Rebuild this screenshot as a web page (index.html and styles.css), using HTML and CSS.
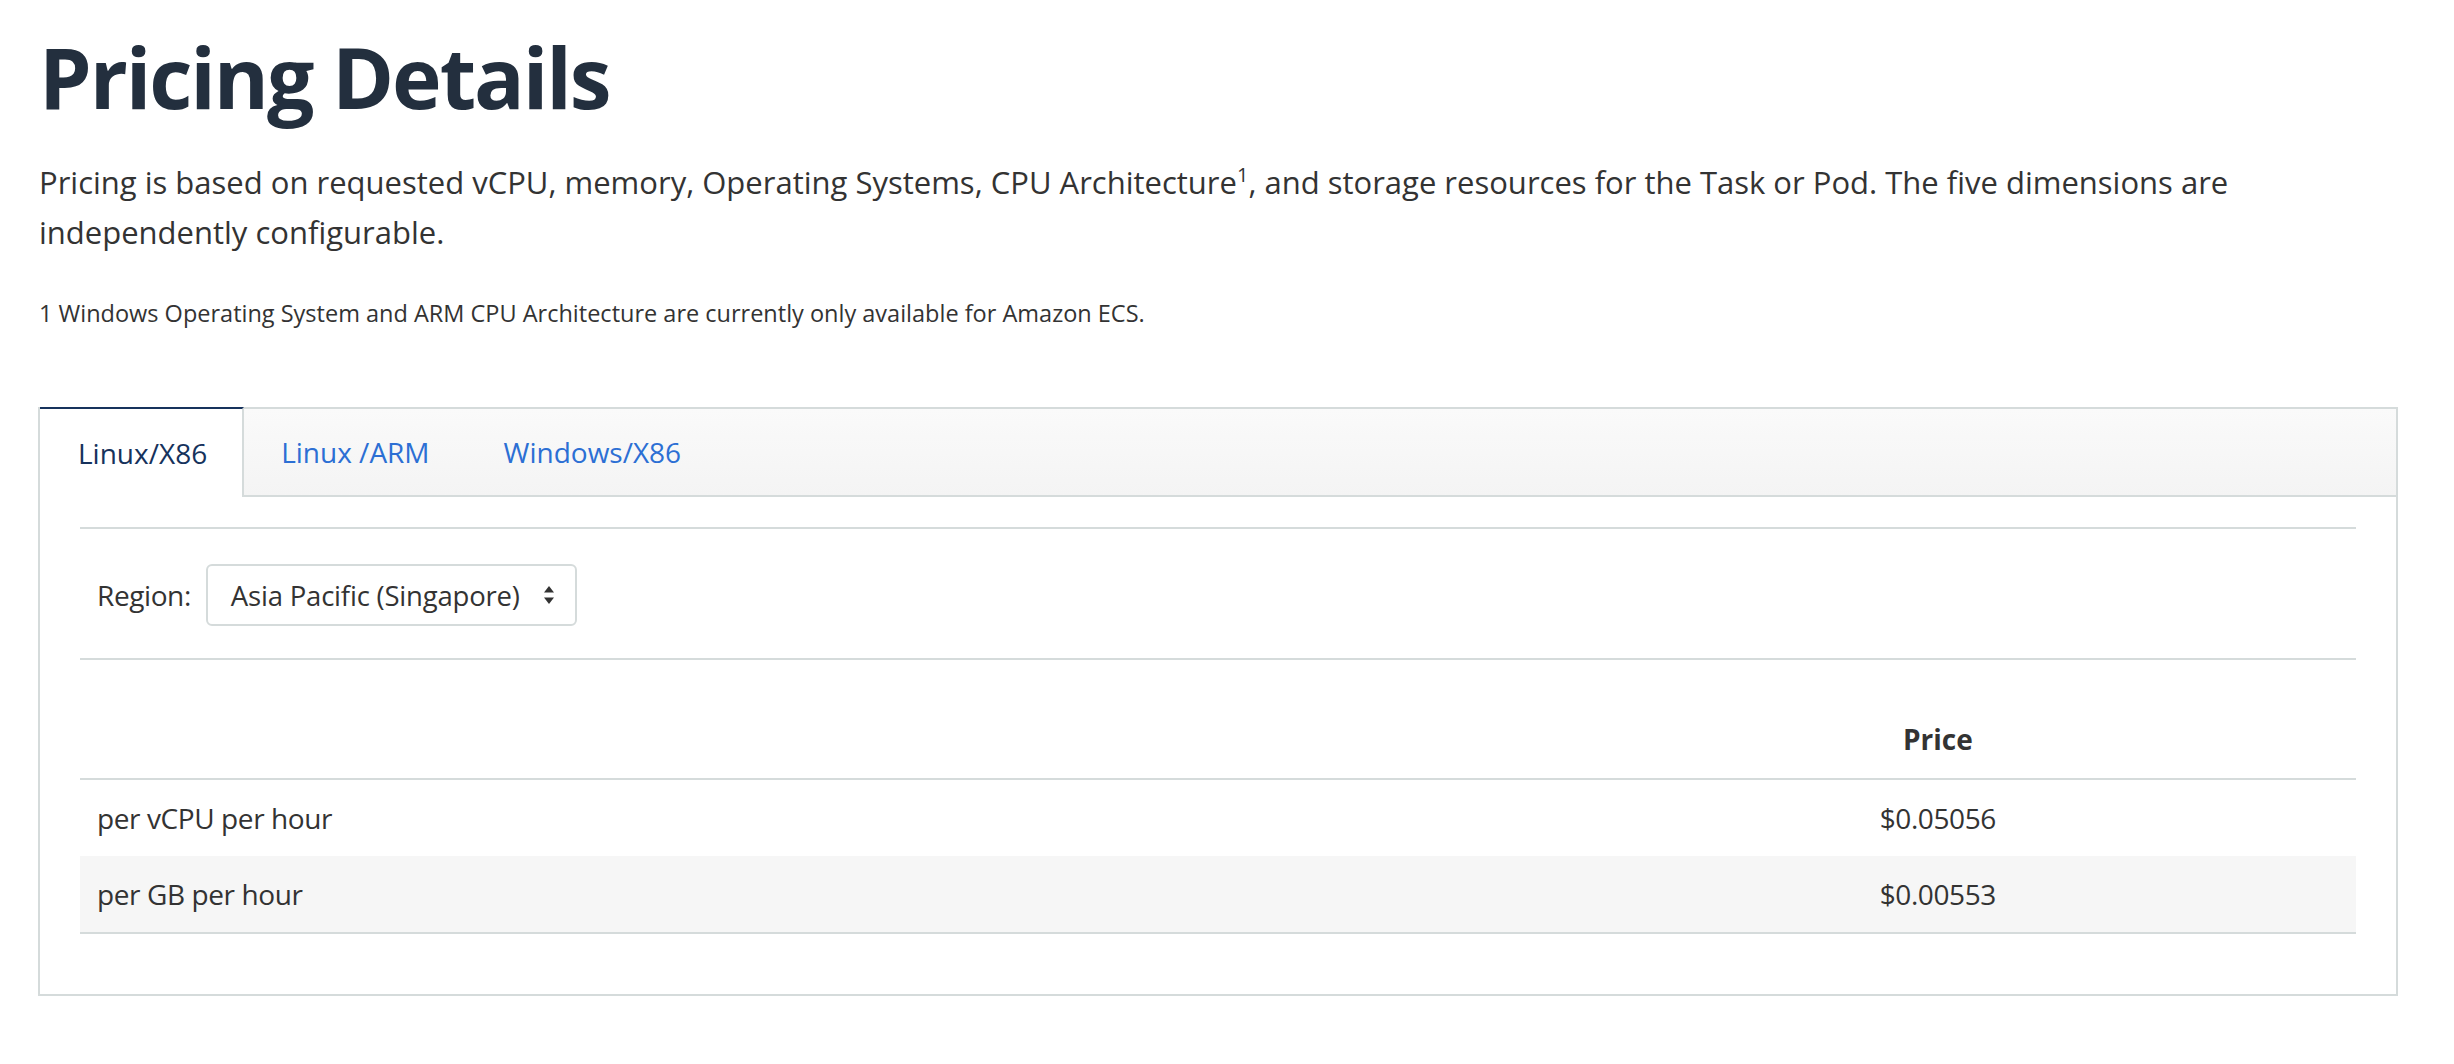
FILE: index.html
```html
<!DOCTYPE html>
<html lang="en">
<head>
<meta charset="utf-8">
<title>Pricing Details</title>
<link rel="stylesheet" href="styles.css">
</head>
<body>
<main class="page">
  <h1 class="title">Pricing Details</h1>
  <p class="lead">Pricing is based on requested vCPU, memory, Operating Systems, CPU Architecture<sup>1</sup>, and storage resources for the Task or Pod. The five dimensions are independently configurable.</p>
  <p class="footnote">1 Windows Operating System and ARM CPU Architecture are currently only available for Amazon ECS.</p>

  <section class="panel">
    <nav class="tabs">
      <span class="tab tab-active">Linux/X86</span>
      <span class="tab">Linux /ARM</span>
      <span class="tab">Windows/X86</span>
    </nav>
    <div class="tab-body">
      <div class="region-row">
        <span class="region-label">Region:</span>
        <div class="select">
          <span class="select-text">Asia Pacific (Singapore)</span>
          <svg class="select-arrows" width="10" height="18" viewBox="0 0 10 18" aria-hidden="true">
            <path d="M5 0 L10 6.5 L0 6.5 Z" fill="#333"/>
            <path d="M0 11.5 L10 11.5 L5 18 Z" fill="#333"/>
          </svg>
        </div>
      </div>
      <table class="price-table">
        <thead>
          <tr><th class="col-name"></th><th class="col-price">Price</th></tr>
        </thead>
        <tbody>
          <tr><td>per vCPU per hour</td><td class="col-price">$0.05056</td></tr>
          <tr class="striped"><td>per GB per hour</td><td class="col-price">$0.00553</td></tr>
        </tbody>
      </table>
    </div>
  </section>
</main>
</body>
</html>
```

FILE: styles.css
```css
html, body {
  margin: 0;
  padding: 0;
  background: #ffffff;
}

body {
  font-family: "Open Sans", "Noto Sans", "Liberation Sans", sans-serif;
  color: #333333;
}

.page {
  padding: 27px 56px 40px 38px;
}

.title {
  margin: 0;
  font-size: 84px;
  line-height: 100px;
  font-weight: 700;
  letter-spacing: -2.1px;
  color: #232f3e;
  padding-left: 1px;
}

.lead {
  margin: 30px 0 0;
  max-width: 2290px;
  font-size: 31px;
  line-height: 50px;
  color: #333333;
  padding-left: 1px;
}

.lead sup {
  font-size: 20px;
  line-height: 0;
  vertical-align: 12px;
}

.footnote {
  margin: 38px 0 0;
  font-size: 23.5px;
  line-height: 36px;
  color: #333333;
  padding-left: 1px;
}

.panel {
  margin-top: 76px;
  border: 2px solid #d5dbdb;
}

.tabs {
  display: flex;
  height: 86px;
  background: linear-gradient(#fafafa, #f4f4f4);
  border-bottom: 2px solid #d5dbdb;
}

.tab {
  display: flex;
  align-items: center;
  padding: 0 37px;
  font-size: 28px;
  color: #2c6fd4;
}

.tab-active {
  margin: -2px 0 -2px;
  height: 88px;
  padding: 0 35px 0 38px;
  background: #ffffff;
  border-top: 2px solid #16325c;
  border-right: 2px solid #d5dbdb;
  color: #16325c;
}

.tab-body {
  padding: 30px 40px 60px;
}

.region-row {
  display: flex;
  align-items: center;
  gap: 15px;
  padding: 35px 17px 32px;
  border-top: 2px solid #d5dbdb;
  border-bottom: 2px solid #d5dbdb;
}

.region-label {
  font-size: 28px;
  letter-spacing: -0.4px;
  color: #333333;
}

.select {
  display: flex;
  align-items: center;
  justify-content: space-between;
  box-sizing: border-box;
  width: 371px;
  height: 62px;
  padding: 0 21px 0 23px;
  border: 2px solid #d5dbdb;
  border-radius: 6px;
  background: #ffffff;
}

.select-text {
  font-size: 27.5px;
  letter-spacing: -0.2px;
  color: #333333;
}

.select-arrows {
  display: block;
}

.price-table {
  width: 100%;
  margin-top: 40px;
  border-collapse: collapse;
  font-size: 28px;
  line-height: 40px;
}

.price-table th {
  padding: 19px 17px;
  font-weight: 700;
  color: #333333;
  border-bottom: 2px solid #d5dbdb;
}

.price-table td {
  padding: 18px 17px;
  letter-spacing: -0.4px;
  color: #333333;
}

.price-table tbody tr:last-child td {
  border-bottom: 2px solid #d5dbdb;
}

.col-name {
  width: 63.25%;
  text-align: left;
}

.col-price {
  text-align: center;
}

.striped td {
  background: #f6f6f6;
}
```
